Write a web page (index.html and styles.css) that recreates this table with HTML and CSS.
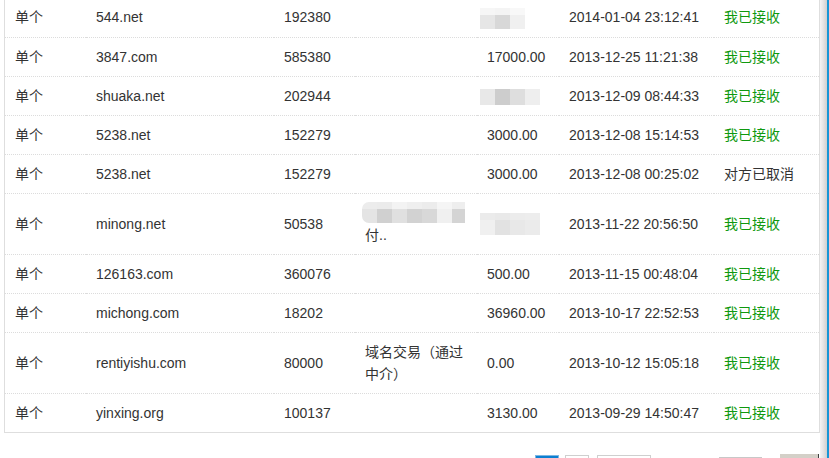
FILE: index.html
```html
<!DOCTYPE html>
<html lang="zh-CN">
<head>
<meta charset="utf-8">
<title>交易记录</title>
<link rel="stylesheet" href="styles.css">
</head>
<body>
<div class="page">
  <div class="main">
    <div class="box">
      <table class="records">
        <colgroup>
          <col class="c1"><col class="c2"><col class="c3"><col class="c4"><col class="c5"><col class="c6"><col class="c7">
        </colgroup>
        <tbody>
          <tr>
            <td>单个</td><td>544.net</td><td>192380</td><td></td>
            <td><span class="mosaic m-a"><i></i><i></i><i></i><i></i><i></i><i></i></span></td>
            <td>2014-01-04 23:12:41</td><td class="ok">我已接收</td>
          </tr>
          <tr>
            <td>单个</td><td>3847.com</td><td>585380</td><td></td><td>17000.00</td>
            <td>2013-12-25 11:21:38</td><td class="ok">我已接收</td>
          </tr>
          <tr>
            <td>单个</td><td>shuaka.net</td><td>202944</td><td></td>
            <td><span class="mosaic m-b"><i></i><i></i><i></i><i></i></span></td>
            <td>2013-12-09 08:44:33</td><td class="ok">我已接收</td>
          </tr>
          <tr>
            <td>单个</td><td>5238.net</td><td>152279</td><td></td><td>3000.00</td>
            <td>2013-12-08 15:14:53</td><td class="ok">我已接收</td>
          </tr>
          <tr>
            <td>单个</td><td>5238.net</td><td>152279</td><td></td><td>3000.00</td>
            <td>2013-12-08 00:25:02</td><td>对方已取消</td>
          </tr>
          <tr>
            <td>单个</td><td>minong.net</td><td>50538</td>
            <td><span class="mosaic m-c"><i></i><i></i><i></i><i></i><i></i><i></i><i></i><i></i><i></i><i></i><i></i><i></i><i></i><i></i></span><br>付..</td>
            <td><span class="mosaic m-d"><i></i><i></i><i></i><i></i><i></i><i></i><i></i><i></i></span></td>
            <td>2013-11-22 20:56:50</td><td class="ok">我已接收</td>
          </tr>
          <tr>
            <td>单个</td><td>126163.com</td><td>360076</td><td></td><td>500.00</td>
            <td>2013-11-15 00:48:04</td><td class="ok">我已接收</td>
          </tr>
          <tr>
            <td>单个</td><td>michong.com</td><td>18202</td><td></td><td>36960.00</td>
            <td>2013-10-17 22:52:53</td><td class="ok">我已接收</td>
          </tr>
          <tr>
            <td>单个</td><td>rentiyishu.com</td><td>80000</td><td>域名交易（通过中介）</td><td>0.00</td>
            <td>2013-10-12 15:05:18</td><td class="ok">我已接收</td>
          </tr>
          <tr>
            <td>单个</td><td>yinxing.org</td><td>100137</td><td></td><td>3130.00</td>
            <td>2013-09-29 14:50:47</td><td class="ok">我已接收</td>
          </tr>
        </tbody>
      </table>
    </div>
    <div class="pager">
      <span class="pg pg-cur"></span>
      <span class="pg pg-num"></span>
      <span class="pg pg-next"></span>
      <span class="pg pg-input"></span>
      <span class="pg pg-btn"></span>
    </div>
  </div>
  <div class="edge"></div>
</div>
</body>
</html>
```

FILE: styles.css
```css
html, body {
  margin: 0;
  padding: 0;
  background: #fff;
  overflow: hidden;
}
body {
  font-family: "Liberation Sans", Arial, "Noto Sans CJK SC", sans-serif;
  font-size: 14px;
  color: #333;
}
.page {
  display: flex;
  width: 829px;
  height: 458px;
  overflow: hidden;
}
.main {
  width: 820px;
  padding-left: 4px;
  box-sizing: border-box;
}
.box {
  margin-top: -3px;
  border: 1px solid #dedede;
  width: 816px;
  box-sizing: border-box;
}
.records {
  width: 814px;
  table-layout: fixed;
  border-collapse: collapse;
}
.c1 { width: 81px; }
.c2 { width: 188px; }
.c3 { width: 81px; }
.c4 { width: 122px; }
.c5 { width: 82px; }
.c6 { width: 155px; }
.c7 { width: 105px; }
.records td {
  padding: 8px 10px 8px 10px;
  line-height: 22px;
  vertical-align: middle;
  border-bottom: 1px dotted #dcdcdc;
  white-space: normal;
  word-break: break-all;
}
.records tr:last-child td {
  border-bottom: none;
}
.records td.ok {
  color: #0f990f;
}
.mosaic {
  display: inline-grid;
  vertical-align: middle;
}
.mosaic i {
  display: block;
}
.m-a {
  margin-left: -7px;
  width: 45px;
  height: 21px;
  grid-template-columns: repeat(3, 15px);
  grid-template-rows: 7px 14px;
}
.m-a i:nth-child(1) { background: #f6f6f6; }
.m-a i:nth-child(2) { background: #f4f4f4; }
.m-a i:nth-child(3) { background: #f8f8f8; }
.m-a i:nth-child(4) { background: #e6e6e6; }
.m-a i:nth-child(5) { background: #d8d8d8; }
.m-a i:nth-child(6) { background: #f0f0f0; }
.m-b {
  margin-left: -7px;
  width: 60px;
  height: 16px;
  grid-template-columns: repeat(4, 15px);
}
.m-b i:nth-child(1) { background: #e8e8e8; }
.m-b i:nth-child(2) { background: #cdcdcd; }
.m-b i:nth-child(3) { background: #dedede; }
.m-b i:nth-child(4) { background: #eeeeee; }
.m-c {
  margin-left: -3px;
  width: 103px;
  height: 21px;
  grid-template-columns: repeat(7, 15px);
  grid-template-rows: 7px 14px;
  border-radius: 7px 0 0 7px;
  overflow: hidden;
  vertical-align: top;
}
.m-c i:nth-child(1) { background: #ececec; }
.m-c i:nth-child(2) { background: #ebebeb; }
.m-c i:nth-child(3) { background: #f3f3f3; }
.m-c i:nth-child(4) { background: #efefef; }
.m-c i:nth-child(5) { background: #ececec; }
.m-c i:nth-child(6) { background: #f5f5f5; }
.m-c i:nth-child(7) { background: #eeeeee; }
.m-c i:nth-child(8) { background: #e4e4e4; }
.m-c i:nth-child(9) { background: #d0d0d0; }
.m-c i:nth-child(10) { background: #e0e0e0; }
.m-c i:nth-child(11) { background: #d2d2d2; }
.m-c i:nth-child(12) { background: #d8d8d8; }
.m-c i:nth-child(13) { background: #f0f0f0; }
.m-c i:nth-child(14) { background: #d4d4d4; }
.m-d {
  margin-left: -7px;
  width: 60px;
  height: 22px;
  grid-template-columns: repeat(4, 15px);
  grid-template-rows: 7px 15px;
}
.m-d i:nth-child(1) { background: #ebebeb; }
.m-d i:nth-child(2) { background: #e9e9e9; }
.m-d i:nth-child(3) { background: #ececec; }
.m-d i:nth-child(4) { background: #ededed; }
.m-d i:nth-child(5) { background: #f0f0f0; }
.m-d i:nth-child(6) { background: #e2e2e2; }
.m-d i:nth-child(7) { background: #e8e8e8; }
.m-d i:nth-child(8) { background: #ebebeb; }

.pager {
  display: flex;
  align-items: flex-start;
  margin-top: 21px;
  padding-left: 531px;
}
.pg {
  display: block;
  height: 20px;
  box-sizing: border-box;
}
.pg-cur {
  width: 24px;
  margin-top: 1px;
  background: #0b7fd1;
  border: 1px solid #7db7e3;
}
.pg-num {
  width: 24px;
  margin-left: 6px;
  margin-top: 1px;
  border: 1px solid #cfcfcf;
  background: #fff;
}
.pg-next {
  width: 54px;
  margin-left: 8px;
  margin-top: 1px;
  border: 1px solid #cfcfcf;
  background: #fff;
}
.pg-input {
  width: 43px;
  margin-left: 68px;
  margin-top: 3px;
  border: 1px solid #c8c8c8;
  background: #fff;
}
.pg-btn {
  width: 39px;
  margin-left: 18px;
  background: #d4d0c8;
  border-right: 1px solid #404040;
}
.edge {
  width: 9px;
  height: 458px;
  flex: none;
  background:
    linear-gradient(to right, #f4f4f4 0, #e6e6e6 3px, #cfcfcf 7px, #1596d6 7px, #1596d6 9px);
}
```
